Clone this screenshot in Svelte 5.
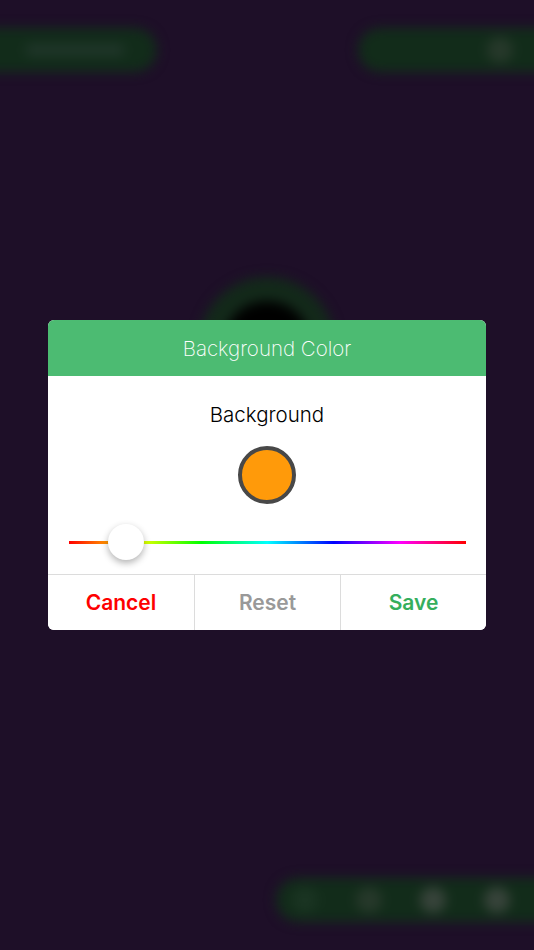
<script>
	let hue = $state(11);
</script>

<div class="page">
	<div class="scene" aria-hidden="true">
		<div class="row top">
			<div class="pill left"><span class="smudge wide"></span></div>
			<div class="pill right"><span class="smudge"></span></div>
		</div>
		<div class="row bottom">
			<div class="pill tools">
				<span class="smudge dim"></span>
				<span class="smudge"></span>
				<span class="smudge bright"></span>
				<span class="smudge bright"></span>
			</div>
		</div>
		<div class="ring"><div class="hole"></div></div>
	</div>

	<div class="overlay">
		<div class="dialog">
			<header>Background Color</header>
			<div class="body">
				<p>Background</p>
				<div class="swatch"></div>
				<input type="range" min="0" max="100" bind:value={hue} class="hue" aria-label="Hue" />
			</div>
			<div class="actions">
				<button class="cancel">Cancel</button>
				<button class="reset">Reset</button>
				<button class="save">Save</button>
			</div>
		</div>
	</div>
</div>

<style>
	:global(body) {
		margin: 0;
		background: #1e0f28;
	}

	.page {
		position: relative;
		width: 534px;
		height: 950px;
		overflow: hidden;
		background: #1e0f28;
		font-family: Inter, "Liberation Sans", sans-serif;
	}

	.scene {
		height: 100%;
		box-sizing: border-box;
		padding: 28px 0;
		display: flex;
		flex-direction: column;
		justify-content: space-between;
		filter: blur(6px);
	}

	.row {
		display: flex;
		justify-content: space-between;
	}

	.bottom {
		justify-content: flex-end;
	}

	.pill {
		height: 44px;
		background: #122c1a;
		border-radius: 22px;
		display: flex;
		align-items: center;
	}

	.pill.left {
		width: 192px;
		margin-left: -35px;
		padding-left: 60px;
		box-sizing: border-box;
	}

	.pill.right {
		width: 216px;
		margin-right: -40px;
		justify-content: flex-end;
		padding-right: 61px;
		box-sizing: border-box;
	}

	.pill.tools {
		width: 298px;
		margin-right: -40px;
		padding-left: 16px;
		gap: 38px;
		box-sizing: border-box;
	}

	.smudge {
		width: 26px;
		height: 26px;
		border-radius: 50%;
		background: #26382a;
	}

	.smudge.wide {
		width: 100px;
		height: 12px;
		border-radius: 6px;
		background: #20362a;
	}

	.smudge.dim {
		background: #1a3422;
	}

	.smudge.bright {
		background: #37433a;
	}

	.ring {
		position: absolute;
		left: 199px;
		top: 277px;
		width: 136px;
		height: 136px;
		border-radius: 50%;
		background: #13291a;
		display: flex;
		align-items: center;
		justify-content: center;
	}

	.hole {
		width: 88px;
		height: 88px;
		border-radius: 50%;
		background: #000;
	}

	.overlay {
		position: absolute;
		inset: 0;
		display: flex;
		align-items: center;
		justify-content: center;
	}

	.dialog {
		width: 438px;
		height: 310px;
		display: flex;
		flex-direction: column;
		background: #fff;
		border-radius: 6px;
		overflow: hidden;
	}

	header {
		height: 56px;
		flex: none;
		display: flex;
		align-items: center;
		justify-content: center;
		background: #4cbb72;
		color: #fff;
		font-size: 20.5px;
		font-weight: 200;
	}

	.body {
		flex: 1;
		display: flex;
		flex-direction: column;
		align-items: center;
		padding: 27px 20px 0;
	}

	p {
		margin: 0;
		font-size: 20.5px;
		font-weight: 300;
		line-height: 24px;
		color: #000;
	}

	.swatch {
		box-sizing: border-box;
		width: 58px;
		height: 58px;
		margin-top: 19px;
		border-radius: 50%;
		background: #ff9a0a;
		border: 4px solid #484848;
	}

	.hue {
		appearance: none;
		-webkit-appearance: none;
		width: 397px;
		height: 36px;
		margin: 20px 0 0;
		padding: 0;
		background: transparent;
		cursor: pointer;
	}

	.hue::-webkit-slider-runnable-track {
		height: 3px;
		background: linear-gradient(to right, #f00, #ff0, #0f0, #0ff, #00f, #f0f, #f00);
	}

	.hue::-webkit-slider-thumb {
		-webkit-appearance: none;
		width: 36px;
		height: 36px;
		margin-top: -16.5px;
		border-radius: 50%;
		background: #fff;
		box-shadow: 0 3px 7px rgba(0, 0, 0, 0.3);
	}

	.actions {
		height: 55px;
		flex: none;
		display: grid;
		grid-template-columns: 146px 146px 146px;
		border-top: 1px solid #dcdcdc;
	}

	button {
		padding: 0;
		border: 0;
		border-left: 1px solid #dcdcdc;
		background: #fff;
		font-family: inherit;
		font-size: 21px;
		font-weight: 600;
		cursor: pointer;
	}

	button:first-child {
		border-left: 0;
	}

	.cancel {
		color: #fe0000;
	}

	.reset {
		color: #999;
	}

	.save {
		color: #35ae5c;
	}
</style>
